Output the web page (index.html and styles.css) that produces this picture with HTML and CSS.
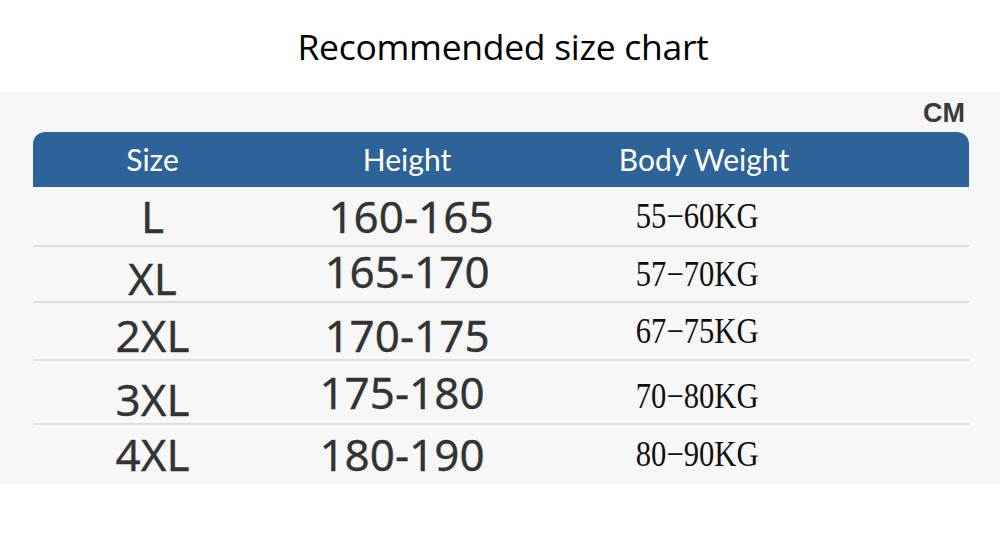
FILE: index.html
```html
<!DOCTYPE html>
<html lang="en">
<head>
<meta charset="utf-8">
<title>Recommended size chart</title>
<link rel="stylesheet" href="styles.css">
</head>
<body>
<div class="page">
  <h1 class="title">Recommended size chart</h1>
  <div class="panel">
    <div class="unit">CM</div>
    <div class="chart">
      <div class="head">
        <div class="hc c1">Size</div>
        <div class="hc c2">Height</div>
        <div class="hc c3">Body Weight</div>
      </div>
      <div class="row r1">
        <div class="size">L</div>
        <div class="height">160-165</div>
        <div class="weight"><span>55−60KG</span></div>
      </div>
      <div class="row r2">
        <div class="size dn">XL</div>
        <div class="height up mid">165-170</div>
        <div class="weight"><span>57−70KG</span></div>
      </div>
      <div class="row r3">
        <div class="size dn">2XL</div>
        <div class="height dn mid">170-175</div>
        <div class="weight"><span>67−75KG</span></div>
      </div>
      <div class="row r4">
        <div class="size dn2">3XL</div>
        <div class="height left">175-180</div>
        <div class="weight dn"><span>70−80KG</span></div>
      </div>
      <div class="row r5">
        <div class="size">4XL</div>
        <div class="height left">180-190</div>
        <div class="weight"><span>80−90KG</span></div>
      </div>
    </div>
  </div>
</div>
</body>
</html>
```

FILE: styles.css
```css
html, body {
  margin: 0;
  padding: 0;
  background: #ffffff;
}

.page {
  width: 1000px;
  height: 550px;
  display: flex;
  flex-direction: column;
}

.title {
  margin: 0;
  height: 92px;
  flex-shrink: 0;
  display: flex;
  align-items: center;
  justify-content: center;
  padding-left: 6px;
  box-sizing: border-box;
  font-family: "Open Sans", "Noto Sans", sans-serif;
  font-weight: 400;
  font-size: 35.5px;
  color: #000;
  letter-spacing: -0.3px;
}

.panel {
  background: #f7f7f7;
  height: 392px;
  flex-shrink: 0;
  padding: 0 31px 0 33px;
  display: flex;
  flex-direction: column;
}

.unit {
  height: 40px;
  flex-shrink: 0;
  display: flex;
  align-items: center;
  justify-content: flex-end;
  padding-right: 4px;
  padding-top: 2px;
  box-sizing: border-box;
  font-family: "Liberation Sans", Arial, sans-serif;
  font-weight: 700;
  font-size: 27px;
  color: #3a3a3a;
}

.chart {
  display: flex;
  flex-direction: column;
}

.head,
.row {
  display: grid;
  grid-template-columns: 239px 270px 310px 1fr;
  align-items: center;
  flex-shrink: 0;
  box-sizing: border-box;
}

.head {
  height: 55px;
  background: #2e6399;
  border-radius: 12px 12px 0 0;
  color: #fff;
  font-family: Lato, "Open Sans", sans-serif;
  font-size: 30px;
  padding-bottom: 2px;
}

.hc {
  text-align: center;
}

.hc.c3 {
  padding-left: 14px;
}

.row {
  border-bottom: 2px solid #dcdcdc;
}

.row.r5 {
  border-bottom: none;
}

.r1 { height: 60px; }
.r2 { height: 56px; }
.r3 { height: 58px; }
.r4 { height: 64px; }
.r5 { height: 58px; }

.size,
.height {
  text-align: center;
  font-family: "Noto Sans", "Open Sans", sans-serif;
  font-weight: 400;
  font-size: 44px;
  line-height: 1;
  color: #333;
  -webkit-text-stroke: 0.3px #333;
}

.height {
  padding-left: 8px;
}

.height.mid {
  padding-left: 0;
}

.height.left {
  padding-left: 0;
  padding-right: 10px;
}

.weight {
  text-align: center;
  font-family: "Liberation Serif", "Times New Roman", serif;
  font-size: 36px;
  line-height: 1;
  color: #111;
}

.weight span {
  display: inline-block;
  transform: scaleX(0.85);
}

.dn { padding-top: 8px; }
.dn2 { padding-top: 14px; }
.up { padding-bottom: 6px; }
```
